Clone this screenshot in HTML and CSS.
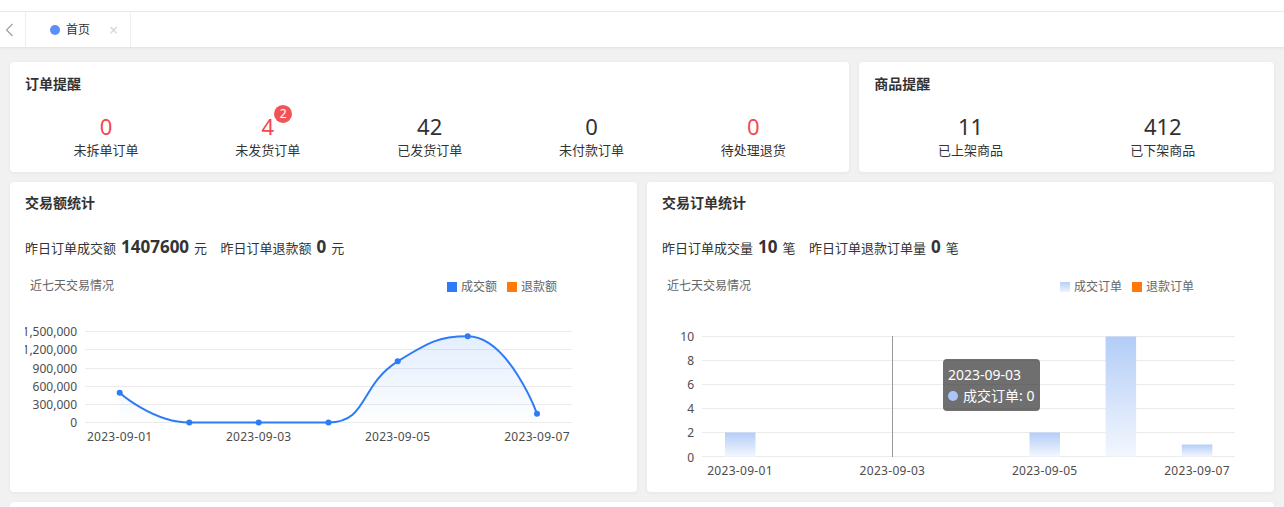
FILE: index.html
```html
<!DOCTYPE html>
<html lang="zh-CN">
<head>
<meta charset="utf-8">
<title>首页</title>
<link rel="stylesheet" href="styles.css">
</head>
<body>
<div class="topbar"></div>
<nav class="tabs">
  <div class="tabs-arrow">
    <svg width="10" height="14" viewBox="0 0 10 14"><path d="M8.5 1 L2.5 7 L8.5 13" fill="none" stroke="#a0a0a0" stroke-width="1.2"/></svg>
  </div>
  <div class="tab">
    <span class="tab-dot"></span>
    <span class="tab-label">首页</span>
    <span class="tab-close">×</span>
  </div>
</nav>

<main class="main">
  <div class="row row-top">
    <section class="card card-top">
      <h3 class="card-title">订单提醒</h3>
      <div class="stats">
        <div class="stat"><div class="stat-num red">0</div><div class="stat-label">未拆单订单</div></div>
        <div class="stat"><div class="stat-num red"><span class="num-wrap">4<span class="badge">2</span></span></div><div class="stat-label">未发货订单</div></div>
        <div class="stat"><div class="stat-num">42</div><div class="stat-label">已发货订单</div></div>
        <div class="stat"><div class="stat-num">0</div><div class="stat-label">未付款订单</div></div>
        <div class="stat"><div class="stat-num red">0</div><div class="stat-label">待处理退货</div></div>
      </div>
    </section>
    <section class="card card-top">
      <h3 class="card-title">商品提醒</h3>
      <div class="stats">
        <div class="stat"><div class="stat-num">11</div><div class="stat-label">已上架商品</div></div>
        <div class="stat"><div class="stat-num">412</div><div class="stat-label">已下架商品</div></div>
      </div>
    </section>
  </div>

  <div class="row row-charts">
    <section class="card card-chart">
      <h3 class="card-title">交易额统计</h3>
      <p class="summary">
        <span class="summary-group">昨日订单成交额<strong>1407600</strong>元</span>
        <span class="summary-group">昨日订单退款额<strong>0</strong>元</span>
      </p>
      <div class="chart-head">
        <span class="chart-sub">近七天交易情况</span>
        <div class="legend">
          <span class="legend-item"><i class="swatch swatch-blue"></i>成交额</span>
          <span class="legend-item"><i class="swatch swatch-orange"></i>退款额</span>
        </div>
      </div>
      <svg class="chart" width="597" height="190" viewBox="25 293 597 190">
        <defs>
          <linearGradient id="areaGrad" x1="0" y1="0" x2="0" y2="1">
            <stop offset="0" stop-color="#2d7cf6" stop-opacity="0.13"/>
            <stop offset="1" stop-color="#2d7cf6" stop-opacity="0.01"/>
          </linearGradient>
        </defs>
        <g class="grid">
          <line x1="85" y1="330.5" x2="572" y2="330.5"/>
          <line x1="85" y1="348.5" x2="572" y2="348.5"/>
          <line x1="85" y1="367.5" x2="572" y2="367.5"/>
          <line x1="85" y1="385.5" x2="572" y2="385.5"/>
          <line x1="85" y1="403.5" x2="572" y2="403.5"/>
          <line x1="85" y1="421.5" x2="572" y2="421.5"/>
        </g>
        <g class="axis-label ylab">
          <text x="77" y="330.5">1,500,000</text>
          <text x="77" y="348.5">1,200,000</text>
          <text x="77" y="367">900,000</text>
          <text x="77" y="385.5">600,000</text>
          <text x="77" y="403.5">300,000</text>
          <text x="77" y="421.5">0</text>
        </g>
        <g class="axis-label xlab">
          <text x="119.7" y="435.5">2023-09-01</text>
          <text x="258.7" y="435.5">2023-09-03</text>
          <text x="397.7" y="435.5">2023-09-05</text>
          <text x="537" y="435.5">2023-09-07</text>
        </g>
        <path class="area" d="M119.7 391.7 C119.7 391.7 153 421.5 189.3 421.5 C222.5 421.5 223.9 421.5 258.7 421.5 C293.5 421.5 298.6 421.5 328.5 421.5 C368.2 421.5 359.1 384.4 397.7 360.3 C428.7 341 438.7 335.3 467.7 335.3 C508.3 335.3 537 412.7 537 412.7 L537 421.5 L119.7 421.5 Z"/>
        <path class="line" d="M119.7 391.7 C119.7 391.7 153 421.5 189.3 421.5 C222.5 421.5 223.9 421.5 258.7 421.5 C293.5 421.5 298.6 421.5 328.5 421.5 C368.2 421.5 359.1 384.4 397.7 360.3 C428.7 341 438.7 335.3 467.7 335.3 C508.3 335.3 537 412.7 537 412.7"/>
        <g class="dots">
          <circle cx="119.7" cy="391.7" r="3"/>
          <circle cx="189.3" cy="421.5" r="3"/>
          <circle cx="258.7" cy="421.5" r="3"/>
          <circle cx="328.5" cy="421.5" r="3"/>
          <circle cx="397.7" cy="360.3" r="3"/>
          <circle cx="467.7" cy="335.3" r="3"/>
          <circle cx="537" cy="412.7" r="3"/>
        </g>
      </svg>
    </section>

    <section class="card card-chart">
      <h3 class="card-title">交易订单统计</h3>
      <p class="summary">
        <span class="summary-group">昨日订单成交量<strong>10</strong>笔</span>
        <span class="summary-group">昨日订单退款订单量<strong>0</strong>笔</span>
      </p>
      <div class="chart-head">
        <span class="chart-sub">近七天交易情况</span>
        <div class="legend">
          <span class="legend-item"><i class="swatch swatch-light"></i>成交订单</span>
          <span class="legend-item"><i class="swatch swatch-orange"></i>退款订单</span>
        </div>
      </div>
      <svg class="chart" width="597" height="190" viewBox="662 293 597 190">
        <defs>
          <linearGradient id="barGrad" x1="0" y1="0" x2="0" y2="1">
            <stop offset="0" stop-color="#b3cdf7"/>
            <stop offset="1" stop-color="#f3f7fe"/>
          </linearGradient>
        </defs>
        <g class="grid">
          <line x1="702" y1="335.5" x2="1235" y2="335.5"/>
          <line x1="702" y1="359.5" x2="1235" y2="359.5"/>
          <line x1="702" y1="383.5" x2="1235" y2="383.5"/>
          <line x1="702" y1="407.5" x2="1235" y2="407.5"/>
          <line x1="702" y1="431.5" x2="1235" y2="431.5"/>
          <line x1="702" y1="455.5" x2="1235" y2="455.5"/>
        </g>
        <g class="axis-label ylab">
          <text x="694" y="335">10</text>
          <text x="694" y="359.5">8</text>
          <text x="694" y="383.5">6</text>
          <text x="694" y="407.5">4</text>
          <text x="694" y="431.5">2</text>
          <text x="694" y="456">0</text>
        </g>
        <g class="axis-label xlab">
          <text x="740" y="469">2023-09-01</text>
          <text x="892.4" y="469">2023-09-03</text>
          <text x="1044.7" y="469">2023-09-05</text>
          <text x="1197" y="469">2023-09-07</text>
        </g>
        <line class="pointer" x1="892.5" y1="335" x2="892.5" y2="456"/>
        <g class="bars">
          <rect x="725" y="431.5" width="30.5" height="24"/>
          <rect x="1029.5" y="431.5" width="30.5" height="24"/>
          <rect x="1105.6" y="335.5" width="30.5" height="120"/>
          <rect x="1181.8" y="443.5" width="30.5" height="12"/>
        </g>
      </svg>
      <div class="tooltip">
        <div class="tooltip-title">2023-09-03</div>
        <div class="tooltip-row"><i class="tooltip-dot"></i>成交订单: 0</div>
      </div>
    </section>
  </div>

  <section class="card card-bottom"></section>
</main>
</body>
</html>
```

FILE: styles.css
```css
* {
  box-sizing: border-box;
  margin: 0;
  padding: 0;
}

html,
body {
  height: 100%;
}

body {
  font-family: "Noto Sans", "Noto Sans CJK SC", sans-serif;
  background: #f1f1f1;
  color: #333;
  overflow: hidden;
}

.topbar {
  height: 12px;
  background: #fff;
  border-bottom: 1px solid #ebebeb;
}

.tabs {
  height: 35px;
  background: #fff;
  display: flex;
  box-shadow: 0 1px 3px rgba(0, 0, 0, 0.07);
}

.tabs-arrow {
  width: 26px;
  border-right: 1px solid #eeeeee;
  display: flex;
  align-items: center;
  padding-left: 4px;
}

.tab {
  width: 105px;
  border-right: 1px solid #eeeeee;
  display: flex;
  align-items: center;
  padding-left: 24px;
  font-size: 12px;
  line-height: 16px;
}

.tab-dot {
  width: 10px;
  height: 10px;
  border-radius: 50%;
  background: #5b8ff9;
  margin-right: 6px;
}

.tab-label {
  color: #333;
}

.tab-close {
  margin-left: 19px;
  color: #d5d5d5;
  font-size: 16px;
}

.main {
  padding: 15px 10px 0;
}

.row {
  display: grid;
  gap: 10px;
}

.row-top {
  grid-template-columns: calc((100% + 10px) * 2 / 3 - 10px) 1fr;
}

.row-charts {
  grid-template-columns: 1fr 1fr;
  margin-top: 10px;
}

.card {
  background: #fff;
  border-radius: 4px;
  box-shadow: 0 1px 4px rgba(0, 0, 0, 0.05);
}

.card-title {
  font-size: 14px;
  line-height: 14px;
  font-weight: 700;
  color: #333;
}

.card-top {
  height: 110px;
  padding: 15px 15px 0;
}

.stats {
  display: flex;
  margin-top: 22px;
}

.stat {
  flex: 1;
  text-align: center;
}

.stat-num {
  font-size: 22px;
  line-height: 26px;
  color: #303133;
}

.stat-num.red {
  color: #f4474f;
}

.num-wrap {
  position: relative;
  display: inline-block;
}

.badge {
  position: absolute;
  top: 0;
  right: 0;
  transform: translate(100%, -45%);
  min-width: 18px;
  height: 18px;
  border-radius: 9px;
  background: #f05454;
  color: #fff;
  font-size: 12px;
  line-height: 18px;
  text-align: center;
}

.stat-label {
  margin-top: 1px;
  font-size: 13px;
  line-height: 20px;
  color: #333;
}

.card-chart {
  position: relative;
  height: 310px;
  padding: 14px 15px 0;
}

.summary {
  margin-top: 25px;
  font-size: 13px;
  line-height: 24px;
  color: #333;
}

.summary strong {
  font-size: 17px;
  font-weight: 700;
  margin: 0 5px;
}

.summary-group + .summary-group {
  margin-left: 10px;
}

.chart-head {
  margin-top: 18px;
  height: 16px;
  display: flex;
  justify-content: space-between;
  align-items: center;
  padding: 0 65px 0 5px;
  font-size: 12px;
  line-height: 16px;
  color: #666;
}

.legend {
  display: flex;
  align-items: center;
  gap: 10px;
  margin-top: 2px;
}

.legend-item {
  display: flex;
  align-items: center;
  gap: 4px;
}

.swatch {
  display: block;
  width: 10px;
  height: 10px;
}

.swatch-blue {
  background: #2d7cf6;
}

.swatch-orange {
  background: #ff7a0a;
}

.swatch-light {
  background: linear-gradient(#b8d0f8, #eef3fd);
}

.chart {
  display: block;
}

.grid line {
  stroke: #ebebeb;
  stroke-width: 1;
}

.axis-label text {
  font-family: "Noto Sans", "Noto Sans CJK SC", sans-serif;
  font-size: 12px;
  fill: #4d4d4d;
  dominant-baseline: central;
}

.ylab text {
  text-anchor: end;
}

.xlab text {
  text-anchor: middle;
  letter-spacing: 0.3px;
}

.area {
  fill: url(#areaGrad);
}

.line {
  fill: none;
  stroke: #2d7cf6;
  stroke-width: 2;
}

.dots circle {
  fill: #2d7cf6;
}

.pointer {
  stroke: #999;
  stroke-width: 1;
}

.bars rect {
  fill: url(#barGrad);
}

.tooltip {
  position: absolute;
  left: 296px;
  top: 177px;
  width: 97px;
  padding: 5px;
  border-radius: 4px;
  background: rgba(50, 50, 50, 0.7);
  color: #fff;
  font-size: 14px;
  line-height: 21px;
  white-space: nowrap;
}

.tooltip-row {
  display: flex;
  align-items: center;
}

.tooltip-dot {
  display: block;
  width: 10px;
  height: 10px;
  border-radius: 50%;
  background: #aac6f8;
  margin-right: 5px;
}

.card-bottom {
  margin-top: 10px;
  height: 5px;
  border-radius: 4px 4px 0 0;
}
```
